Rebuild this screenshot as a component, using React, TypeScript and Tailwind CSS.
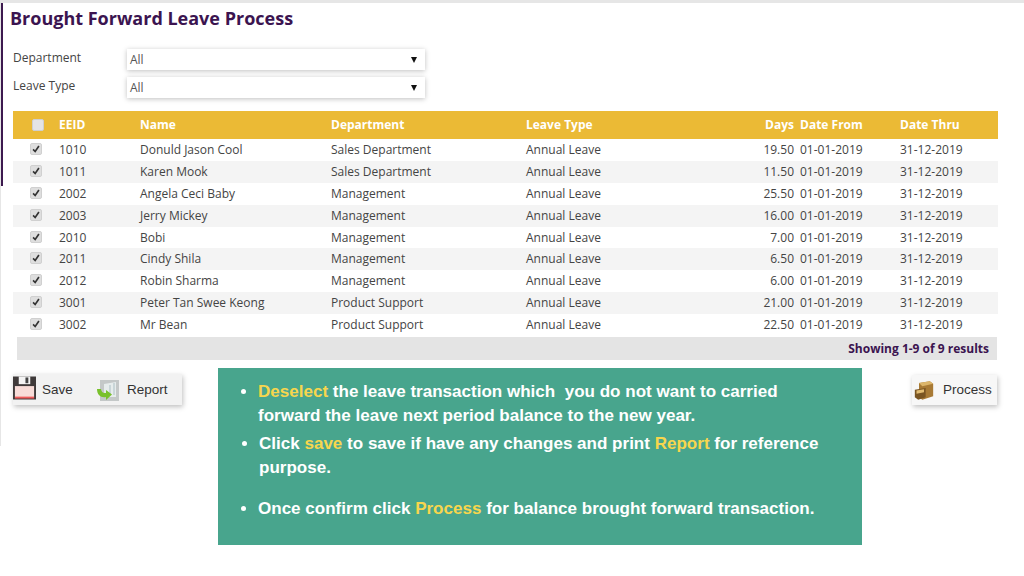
import React from "react";

const rows = [
  ["1010", "Donuld Jason Cool", "Sales Department", "19.50"],
  ["1011", "Karen Mook", "Sales Department", "11.50"],
  ["2002", "Angela Ceci Baby", "Management", "25.50"],
  ["2003", "Jerry Mickey", "Management", "16.00"],
  ["2010", "Bobi", "Management", "7.00"],
  ["2011", "Cindy Shila", "Management", "6.50"],
  ["2012", "Robin Sharma", "Management", "6.00"],
  ["3001", "Peter Tan Swee Keong", "Product Support", "21.00"],
  ["3002", "Mr Bean", "Product Support", "22.50"],
];

const gridCols = "grid grid-cols-[46px_81px_191px_195px_200px_68px_6px_100px_98px]";

function Check({ checked }: { checked: boolean }) {
  if (!checked) {
    return <div className="ml-[19px] h-[12px] w-[12px] rounded-[2px] border border-[#cfcfcf] bg-[#e4e4e4]" />;
  }
  return (
    <div className="ml-[17px] flex h-[12px] w-[12px] -translate-y-[1px] items-center justify-center rounded-[2px] border border-[#d0d0d0] bg-[#dedede]">
      <svg viewBox="0 0 12 12" className="h-[10px] w-[10px]">
        <path d="M2.5 6.5 L5 9 L9.5 2.5" fill="none" stroke="#333" strokeWidth="2" />
      </svg>
    </div>
  );
}

function Select() {
  return (
    <div className="ml-[1px] flex h-[21px] w-[298px] items-center justify-between bg-white pl-[3px] pr-[8px] text-[12px] text-[#555] shadow-[0_1px_5px_rgba(0,0,0,0.25)]">
      <span>All</span>
      <span className="h-0 w-0 border-x-[3px] border-t-[6px] border-x-transparent border-t-[#111]" />
    </div>
  );
}

function FloppyIcon() {
  return (
    <svg viewBox="0 0 24 24" className="h-[24px] w-[23px]">
      <path d="M0 0h24v24H0z" fill="#3f3a3a" />
      <path d="M2 10h20v12H2z" fill="#f8dcd8" />
      <path d="M2 21h20v2H2z" fill="#ef5a5a" />
      <path d="M6 0h12v8H6z" fill="#f4f4f4" />
      <path d="M13 1h3v6h-3z" fill="#444" />
    </svg>
  );
}

function ReportIcon() {
  return (
    <svg viewBox="0 0 24 24" className="h-[24px] w-[24px]">
      <path d="M4 2h19v21H4z" fill="#c4c8c8" />
      <path d="M8 6l12-2v15H8z" fill="#e6ecec" />
      <path d="M13 7h2v10h-2zM17 5h2v12h-2z" fill="#c9d6d8" />
      <path d="M1 11 C1 17 5 20 10 19 L10 22 L16 16.5 L10 12 L10 15 C7 15.5 5.5 14 5 11 Z" fill="#79c12c" />
    </svg>
  );
}

function BoxIcon() {
  return (
    <svg viewBox="0 0 24 24" className="h-[23px] w-[20px]">
      <path d="M6 3 L19 1 L23 4 L23 19 L10 23 L6 20 Z" fill="#a87a35" />
      <path d="M6 3 L19 1 L23 4 L10 7 Z" fill="#dcb56a" />
      <path d="M1 11 L14 9 L14 20 L5 23 L1 20 Z" fill="#7a5522" />
      <path d="M3 12 L12 10.5 L12 14 L3 16 Z" fill="#e3bd73" />
    </svg>
  );
}

export default function App() {
  return (
    <div className="h-[576px] w-[1024px] overflow-hidden bg-white font-['Open_Sans',sans-serif] text-[#444]">
      <div className="h-[3px] bg-[#e6e6e6]" />
      <div className="h-[443px] border-l border-[#e6e6e6]">
        <div className="h-[183px] border-l-2 border-[#3d1a4f]">
          <h1 className="ml-[7px] pt-[3px] text-[18px] leading-[24px] font-bold text-[#3b1450]">
            Brought Forward Leave Process
          </h1>
        </div>
      </div>
      <div className="-mt-[446px]">
        <div className="h-[49px]" />
        <div className="flex h-[21px] items-center pl-[13px] text-[12px]">
          <span className="w-[113px] -translate-y-[2px]">Department</span>
          <Select />
        </div>
        <div className="mt-[7px] flex h-[21px] items-center pl-[13px] text-[12px]">
          <span className="w-[113px] -translate-y-[2px]">Leave Type</span>
          <Select />
        </div>

        <div className="mt-[13px] ml-[13px] w-[985px]">
          <div className={`${gridCols} h-[28px] items-center bg-[#ebba35] text-[12px] font-bold text-white`}>
            <Check checked={false} />
            <span>EEID</span>
            <span>Name</span>
            <span>Department</span>
            <span>Leave Type</span>
            <span className="text-right">Days</span>
            <span />
            <span>Date From</span>
            <span>Date Thru</span>
          </div>
          {rows.map((r, i) => (
            <div
              key={r[0]}
              className={`${gridCols} h-[21.9px] items-center text-[12px] ${i % 2 === 1 ? "bg-[#f4f4f4]" : "bg-white"}`}
            >
              <Check checked />
              <span>{r[0]}</span>
              <span>{r[1]}</span>
              <span>{r[2]}</span>
              <span>Annual Leave</span>
              <span className="text-right">{r[3]}</span>
              <span />
              <span>01-01-2019</span>
              <span>31-12-2019</span>
            </div>
          ))}
          <div className="mt-[1px] ml-[4px] flex h-[23px] w-[980px] items-center justify-end bg-[#e4e4e4] pr-[8px] text-[12px] font-bold text-[#3b1450]">
            Showing 1-9 of 9 results
          </div>
        </div>

        <div className="mt-[7px] flex items-start pl-[13px] font-['Liberation_Sans',sans-serif] text-[13.5px] text-[#333]">
          <div className="mt-[7px] flex h-[31px] w-[169px] bg-[#f2f2f2] shadow-[1px_2px_5px_rgba(0,0,0,0.25)]">
            <div className="flex w-[83px] items-center gap-[6px] pt-[2px]">
              <div className="-mt-[5px]">
                <FloppyIcon />
              </div>
              <span>Save</span>
            </div>
            <div className="flex items-center gap-[7px] pt-[2px]">
              <div className="-mt-[2px]">
                <ReportIcon />
              </div>
              <span>Report</span>
            </div>
          </div>

          <div className="mt-[1px] ml-[36px] h-[177px] w-[644px] bg-[#48a58d] pt-[12px] pr-[29px] text-[17.04px] leading-[24px] font-bold text-white">
            <ul className="list-disc pl-[40px]">
              <li>
                <span className="text-[#f7d64d]">Deselect</span> the leave transaction which&nbsp; you do not want to carried forward the leave next period balance to the new year.
              </li>
            </ul>
            <ul className="mt-[4px] list-disc pl-[41px]">
              <li>
                Click <span className="text-[#f7d64d]">save</span> to save if have any changes and print <span className="text-[#f7d64d]">Report</span> for reference purpose.
              </li>
            </ul>
            <ul className="mt-[17px] list-disc pl-[40px]">
              <li>
                Once confirm click <span className="text-[#f7d64d]">Process</span> for balance brought forward transaction.
              </li>
            </ul>
          </div>

          <div className="mt-[8px] ml-[50px] flex h-[30px] w-[85px] items-center gap-[9px] bg-[#f7f7f7] pl-[2px] pt-[1px] shadow-[1px_2px_5px_rgba(0,0,0,0.25)]">
            <BoxIcon />
            <span>Process</span>
          </div>
        </div>
      </div>
    </div>
  );
}
